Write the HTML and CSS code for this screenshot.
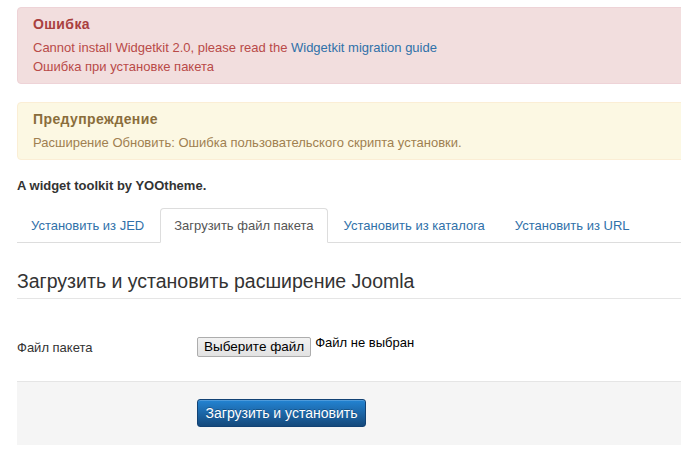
FILE: index.html
```html
<!DOCTYPE html>
<html lang="ru">
<head>
    <meta charset="UTF-8">
    <meta name="viewport" content="width=device-width, initial-scale=1.0">
    <title>Менеджер расширений: Установка</title>
    <link rel="stylesheet" href="styles.css">
</head>
<body>

<div class="page">

    <!-- Сообщения системы -->
    <div class="alert alert-error">
        <h4 class="alert-heading">Ошибка</h4>
        <div>Cannot install Widgetkit 2.0, please read the <a href="#">Widgetkit migration guide</a></div>
        <div>Ошибка при установке пакета</div>
    </div>

    <div class="alert alert-warning">
        <h4 class="alert-heading">Предупреждение</h4>
        <div>Расширение Обновить: Ошибка пользовательского скрипта установки.</div>
    </div>

    <p class="toolkit">A widget toolkit by YOOtheme.</p>

    <ul class="nav-tabs">
        <li><a href="#">Установить из JED</a></li>
        <li class="active"><a href="#">Загрузить файл пакета</a></li>
        <li><a href="#">Установить из каталога</a></li>
        <li><a href="#">Установить из URL</a></li>
    </ul>

    <div class="upload">
        <h2 class="upload-title">Загрузить и установить расширение Joomla</h2>

        <div class="control-group">
            <label class="control-label">Файл пакета</label>
            <div class="controls">
                <span class="file-btn">Выберите файл</span>
                <span class="file-name">Файл не выбран</span>
            </div>
        </div>

        <div class="form-actions">
            <button class="btn-primary" type="button">Загрузить и установить</button>
        </div>
    </div>

</div>

</body>
</html>
```

FILE: styles.css
```css
body {
    margin: 0;
    overflow: hidden;
    font-family: "Liberation Sans", Arial, sans-serif; /* Isis uses Open Sans / Arial */
    font-size: 13px;
    line-height: 18px;
    color: #333;
    background-color: #fff;
}
a {
    color: #3071a9;
    text-decoration: none;
}
.page {
    padding: 7px 0 0 17px;
    margin-right: -20px; /* content runs past the right edge of the window */
}

/* Alerts */
.alert {
    border: 1px solid;
    border-radius: 4px;
    padding: 7px 14px 7px 15px;
}
.alert-heading {
    margin: 0 0 5px;
    font-size: 14px;
    line-height: 18px;
    font-weight: bold;
    letter-spacing: 0.4px;
}
.alert div {
    line-height: 19px;
}
.alert-error {
    background-color: #f2dede;
    border-color: #eed3d7;
    color: #b94a48;
}
.alert-error .alert-heading {
    color: #a9403e;
}
.alert-warning {
    margin-top: 18px;
    background-color: #fcf8e3;
    border-color: #fbeed5;
    color: #a08050;
}
.alert-warning .alert-heading {
    color: #8a6d3b;
}

.toolkit {
    margin: 17px 0 13px;
    font-weight: bold;
}

/* Tabs */
.nav-tabs {
    display: flex;
    list-style: none;
    margin: 0;
    padding: 0;
    border-bottom: 1px solid #ddd;
}
.nav-tabs li {
    margin: 0 2px -1px 0;
}
.nav-tabs a {
    display: block;
    padding: 8px 13px;
    border: 1px solid transparent;
    border-radius: 4px 4px 0 0;
    line-height: 17px;
}
.nav-tabs .active a {
    color: #555;
    background-color: #fff;
    border-color: #ddd #ddd transparent;
}

/* Upload form */
.upload-title {
    margin: 23px 0 0;
    padding-bottom: 2px;
    font-size: 19.5px;
    font-weight: normal;
    line-height: 30px;
    border-bottom: 1px solid #e5e5e5;
}
.control-group {
    display: flex;
    align-items: flex-start;
    margin-top: 38px;
    height: 44px;
}
.control-label {
    width: 180px;
    padding-top: 2px;
}
.controls {
    display: flex;
    align-items: flex-start;
}
.file-btn {
    padding: 1px 6px;
    font-size: 13.5px;
    line-height: 16px;
    color: #000;
    background: linear-gradient(#f2f2f2, #e2e2e2);
    border: 1px solid #adadad;
    border-radius: 2px;
}
.file-name {
    margin-left: 4px;
    margin-top: -3px;
    font-size: 13px;
    color: #000;
}
.form-actions {
    padding: 17px 0 18px 180px;
    background-color: #f5f5f5;
    border-top: 1px solid #e5e5e5;
}
.btn-primary {
    width: 169px;
    height: 28px;
    padding: 0;
    font-family: inherit;
    font-size: 14px;
    color: #fff;
    background: linear-gradient(#2384d3, #15497c);
    border: 1px solid #124274;
    border-radius: 3px;
    box-shadow: inset 0 1px 0 rgba(255, 255, 255, 0.2);
    text-shadow: 0 -1px 0 rgba(0, 0, 0, 0.25);
    cursor: pointer;
}
```
